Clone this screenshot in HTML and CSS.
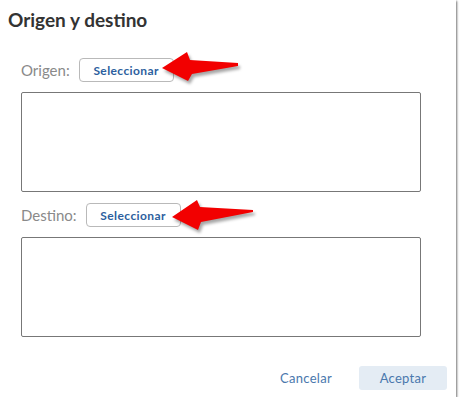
FILE: index.html
```html
<!DOCTYPE html>
<html lang="es">
<head>
  <meta charset="UTF-8">
  <title>Origen y destino</title>
  <link rel="stylesheet" href="styles.css">
</head>
<body>
  <div class="dialog">
    <h1 class="title">Origen y destino</h1>

    <div class="content">
      <div class="field-row">
        <span class="label">Origen:</span>
        <button class="btn-select">Seleccionar</button>
      </div>
      <div class="box"></div>

      <div class="field-row second">
        <span class="label">Destino:</span>
        <button class="btn-select">Seleccionar</button>
      </div>
      <div class="box"></div>
    </div>

    <div class="footer">
      <button class="btn-link">Cancelar</button>
      <button class="btn-primary">Aceptar</button>
    </div>

    <!-- flechas de anotación -->
    <svg class="arrows" width="460" height="400" viewBox="0 0 460 400">
      <polygon points="162,68 187,52 190,60 238,63 238,66 192,74 188,81" />
      <polygon points="172,217 197,200 200,207 253,210 253,212 201,222 198,230" />
    </svg>
  </div>
</body>
</html>
```

FILE: styles.css
```css
body { margin: 0; background: #fff; font-family: Lato, "Open Sans", sans-serif; }

.dialog {
  position: relative;
  width: 456px;
  height: 397px;
  background: #fff;
  box-shadow: 1px 1px 2px rgba(0, 0, 0, 0.55);
  display: flex;
  flex-direction: column;
}

.title {
  margin: 0;
  padding: 8px 8px 0;
  font-size: 19px;
  line-height: 24px;
  font-weight: 700;
  color: #333;
}

.content { padding: 26px 0 0 21px; }

.field-row { display: flex; align-items: center; gap: 9px; height: 24px; }
.field-row.second { margin-top: 11px; }

.label { font-size: 15px; color: #8a8a8a; }

.btn-select {
  height: 24px;
  width: 95px;
  padding: 0;
  background: #fff;
  border: 1px solid #b9b9b9;
  border-radius: 4px;
  font-family: inherit;
  font-size: 12px;
  letter-spacing: 0.4px;
  font-weight: 700;
  color: #2d5f9e;
}

.box {
  margin-top: 10px;
  width: 400px;
  height: 100px;
  box-sizing: border-box;
  border: 1px solid #777;
  border-radius: 2px;
}

.footer {
  margin-top: auto;
  padding: 0 9px 7px;
  display: flex;
  justify-content: flex-end;
  align-items: center;
  gap: 27px;
}

.btn-link, .btn-primary {
  font-family: inherit;
  font-size: 13px;
  letter-spacing: 0.3px;
  color: #4a78ad;
  border: 0;
  padding: 0;
}

.btn-link { background: none; }

.btn-primary {
  width: 88px;
  height: 24px;
  background: #e4ecf4;
  border-radius: 3px;
}

.arrows {
  position: absolute;
  left: 0;
  top: 0;
  pointer-events: none;
}

.arrows polygon {
  fill: #f20000;
  filter: drop-shadow(2px 3px 1.5px rgba(0, 0, 0, 0.35));
}
```
